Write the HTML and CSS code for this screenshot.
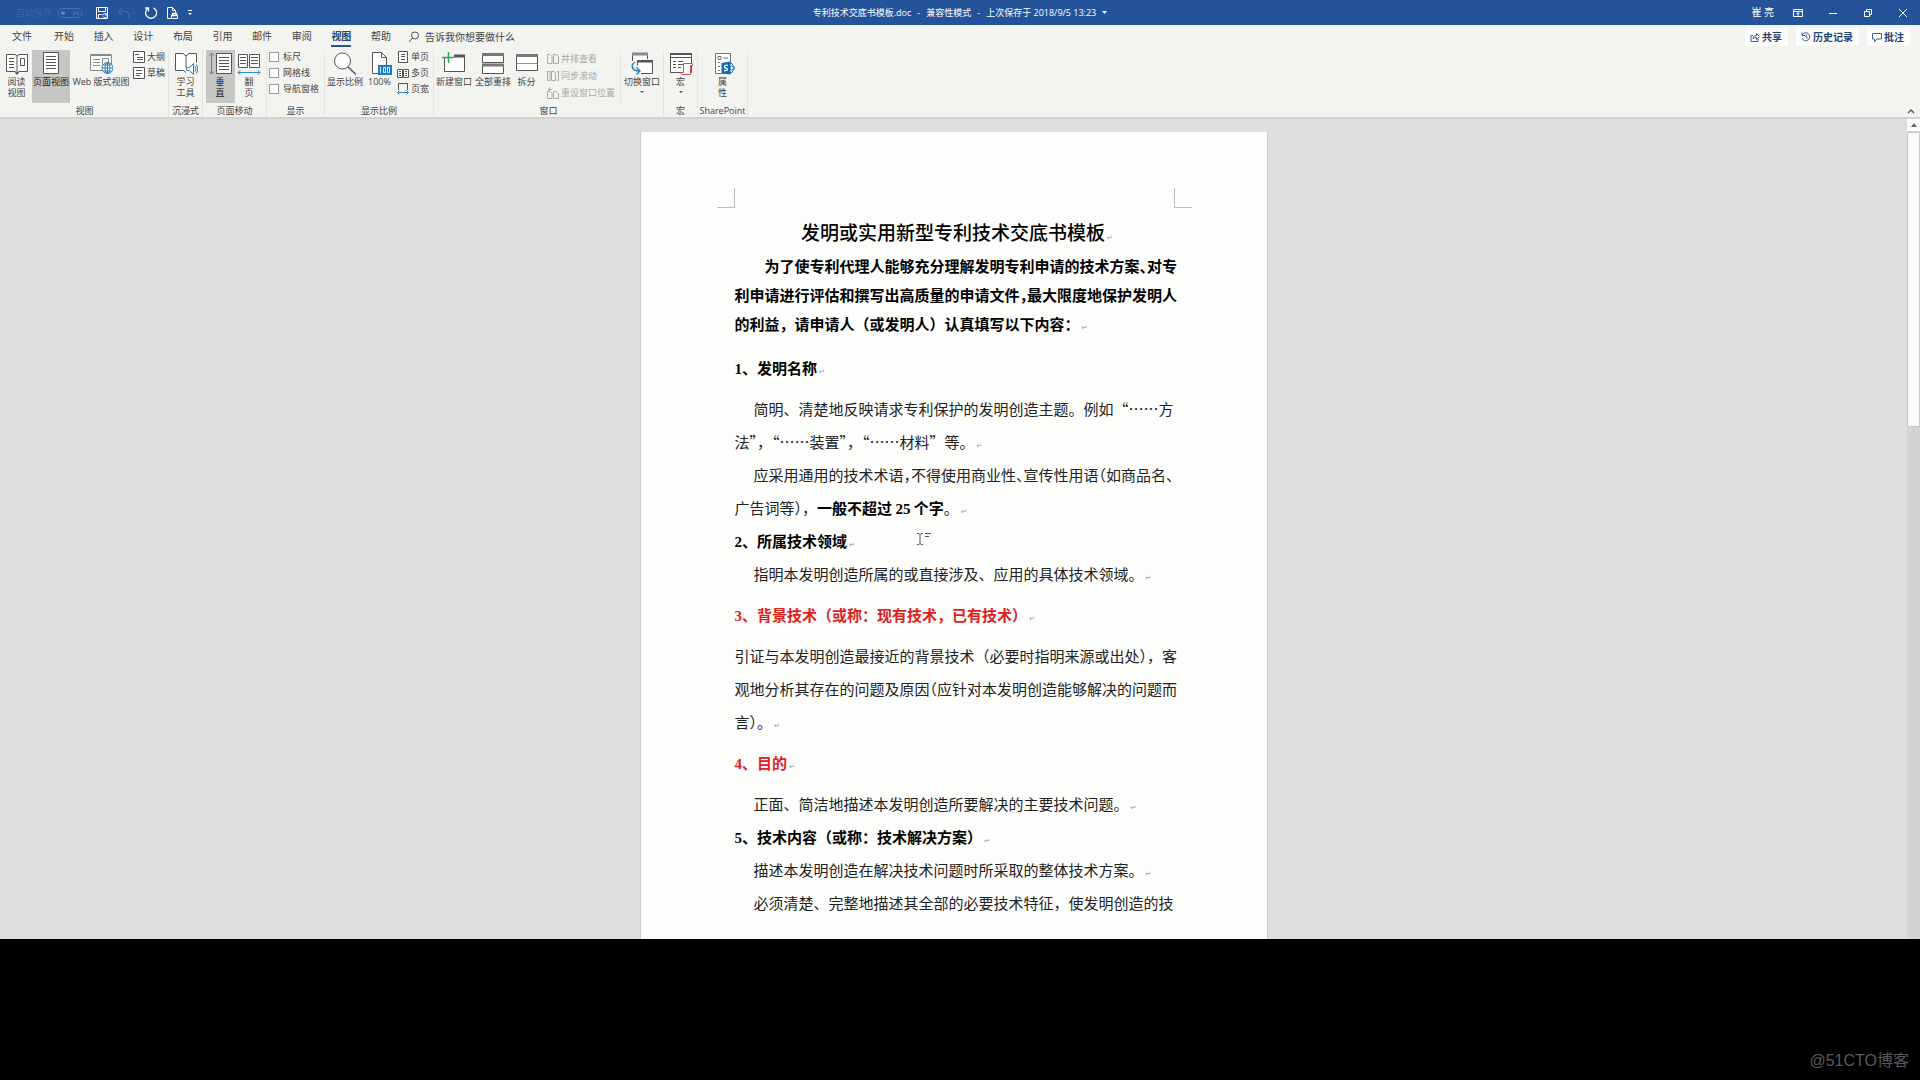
FILE: index.html
```html
<!DOCTYPE html>
<html lang="zh-CN">
<head>
<meta charset="utf-8">
<title>专利技术交底书模板.doc</title>
<link rel="stylesheet" href="styles.css">
</head>
<body>
<div class="app">
  <header class="titlebar">
    <div class="quick">
      <span class="autosave">自动保存</span>
      <svg class="toggle" width="26" height="12" viewBox="0 0 26 12"><rect x="1" y="1.500" width="24" height="9" rx="4.500" fill="none" stroke="#4a74b1"/><circle cx="6" cy="6" r="2" fill="#5d86bf"/><path d="M17 3.500v5M21 3.500v5M17 6h4" stroke="#4a74b1"/></svg>
      <button class="icon-btn save" aria-label="保存"><svg width="14" height="14" viewBox="0 0 14 14" fill="none" stroke="#fff"><path d="M1.500 1.500h11v11h-11zM3.500 1.500v4h7v-4M3.500 12.500v-4h3"/><path d="M7.500 9.500a2.200 2.200 0 0 1 4-1M11.800 7v2h-2M12 10.500a2.200 2.200 0 0 1-4 0"/></svg></button>
      <button class="icon-btn undo" aria-label="撤消"><svg width="19" height="14" viewBox="0 0 19 14" fill="none" stroke="#3a68ac"><path d="M5 2 1.500 5.500 5 9M1.500 5.500H8a3.500 3.500 0 0 1 3 6" stroke-width="1.400"/><path d="M15 6.500h4l-2 2z" fill="#3a68ac" stroke="none"/></svg></button>
      <button class="icon-btn redo" aria-label="重复"><svg width="14" height="14" viewBox="0 0 14 14" fill="none" stroke="#fff" stroke-width="1.300"><path d="M9.500 1.800A5.500 5.500 0 1 1 4 2.200M1 2h3.500v3.500"/></svg></button>
      <button class="icon-btn preview" aria-label="打印预览"><svg width="14" height="14" viewBox="0 0 14 14" fill="none" stroke="#fff"><path d="M5 12.500H1.500v-11h5l3 3v2M6.500 1.500v3h3"/><path d="M5.500 9.500h6v3h-6z"/><path d="M6.500 9V7.500h4V9M5 9.500h7" stroke-width="1.400"/></svg></button>
      <button class="icon-btn" aria-label="自定义快速访问工具栏"><svg width="4" height="8" viewBox="0 0 4 8" fill="#fff"><path d="M0 1h4v1H0zM0 4h4L2 6z"/></svg></button>
    </div>
    <div class="doc-name"><span>专利技术交底书模板.doc</span><span>-</span><span>兼容性模式</span><span>-</span><span>上次保存于 2018/9/5 13:23</span><svg width="5" height="6" viewBox="0 0 5 6"><path d="M0 1h5L2.500 4z" fill="#fff"/></svg></div>
    <div class="window-tools">
      <span class="user">崔 亮</span>
      <button class="icon-btn" aria-label="功能区显示选项"><svg width="10" height="10" viewBox="0 0 10 10" fill="none" stroke="#fff"><path d="M.5 1.500h9v7h-9zM.5 3.500h9M5 8V5M3.500 6 5 4.500 6.500 6"/></svg></button>
      <button class="icon-btn" aria-label="最小化"><svg width="10" height="10" viewBox="0 0 10 10"><path d="M1 5.500h8" stroke="#fff"/></svg></button>
      <button class="icon-btn" aria-label="还原"><svg width="10" height="10" viewBox="0 0 10 10" fill="none" stroke="#fff"><path d="M1.500 3.500h5v5h-5zM3.500 3V1.500h5v5H7"/></svg></button>
      <button class="icon-btn" aria-label="关闭"><svg width="10" height="10" viewBox="0 0 10 10"><path d="m1 1 8 8M9 1 1 9" stroke="#fff"/></svg></button>
    </div>
  </header>

  <div class="tabbar">
    <button class="tab file">文件</button>
    <nav class="tabs">
      <button class="tab">开始</button><button class="tab">插入</button><button class="tab">设计</button><button class="tab">布局</button><button class="tab">引用</button><button class="tab">邮件</button><button class="tab">审阅</button><button class="tab active">视图</button><button class="tab">帮助</button>
    </nav>
    <button class="tell-me"><svg width="12" height="12" viewBox="0 0 12 12" fill="none" stroke="#555"><circle cx="7" cy="4.500" r="3.500"/><path d="M4.500 7 1 11"/></svg>告诉我你想要做什么</button>
    <div class="share-tools">
      <button><svg width="10" height="10" viewBox="0 0 10 10" fill="none" stroke="#3d5f8f"><path d="M3 3.500H1v6h7V7M3 6.500c0-2 1.500-3 3.500-3V1.500l3 3-3 3V5.500C5 5.500 4 5.700 3 6.500z"/></svg>共享</button>
      <button><svg width="10" height="10" viewBox="0 0 10 10" fill="none" stroke="#3d5f8f"><path d="M1.200 3A4 4 0 1 1 1 6M1 .5v3h3M5 2.500V5l2 1.500"/></svg>历史记录</button>
      <button><svg width="10" height="10" viewBox="0 0 10 10" fill="none" stroke="#3d5f8f"><path d="M.5 1.500h9v5.500H5L2.500 9.500V7h-2z"/></svg>批注</button>
    </div>
  </div>

  <div class="ribbon">
    <section class="group g-view">
      <div class="tools">
        <button class="tool w31"><svg width="24" height="24" viewBox="0 0 24 24" fill="none" stroke="#555"><path d="M1.500 2.500H10l2 1.500 2-1.500h8.500v17H14l-2 1.500-2-1.500H1.500z" fill="#fff"/><path d="M12 4v17M4 6.500h5M4 9.500h5M4 12.500h5M4 15.500h5M15.500 6.500h4v7h-4z"/><path d="m10.500 20.500 1.500 2 1.500-2z" fill="#555"/></svg>阅读<br>视图</button>
        <button class="tool w38 on"><svg width="24" height="24" viewBox="0 0 24 24" stroke="#555"><path d="M4.500.5h15v21h-15z" fill="#fff"/><path d="M7 4.500h10M7 7.500h10M7 10.500h10M7 13.500h10M7 16.500h10"/></svg>页面视图</button>
        <button class="tool w62"><svg width="24" height="24" viewBox="0 0 24 24" fill="none" stroke="#888"><path d="M1.500 3.500h21v15h-21z" fill="#fff"/><path d="M1.500 2.500h21M4 7.500h7M4 10.500h7M4 13.500h7M13.500 6.500h6v6h-6z"/><circle cx="18.500" cy="16" r="5.500" fill="#fff" stroke="#2e7fb8"/><path d="M13 16h11M18.500 10.500v11M14.500 13h8M14.500 19h8" stroke="#2e7fb8"/><ellipse cx="18.500" cy="16" rx="2.500" ry="5.500" stroke="#2e7fb8"/></svg>Web 版式视图</button>
        <div class="stack">
          <button class="mini"><svg width="12" height="12" viewBox="0 0 12 12" fill="#fff" stroke="#555"><path d="M.5.5h11v11H.5zM2 3.500h4M4 6.500h6M4 8.500h6"/></svg>大纲</button>
          <button class="mini"><svg width="12" height="12" viewBox="0 0 12 12" fill="#fff" stroke="#555"><path d="M.5.5h11v11H.5zM3 3.500h6M3 6.500h6M3 8.500h4"/></svg>草稿</button>
        </div>
      </div>
      <h2>视图</h2>
    </section>
    <section class="group g-immersive">
      <div class="tools center">
        <button class="tool w33"><svg width="24" height="24" viewBox="0 0 24 24" fill="none" stroke="#555"><path d="M12 20H11l-1-.5H1.500V1.500H9L12 4l3-2.500h7.500v9L12 16z" fill="#fff" stroke="none"/><path d="M12 4v12M12 20.500l-2.500-2h-8v-17H9L12 4l3-2.500h7.500v9"/><path d="M12.500 15.500h3l4-4v11l-4-4h-3z" fill="#fff" stroke="#2e7fb8"/><path d="M21 14.500q2 2.500 0 5M22.500 12.500q3 4.500 0 9" stroke="#2e7fb8"/></svg>学习<br>工具</button>
      </div>
      <h2>沉浸式</h2>
    </section>
    <section class="group g-move">
      <div class="tools center">
        <button class="tool w29 on"><svg width="24" height="24" viewBox="0 0 24 24" fill="none" stroke="#555"><path d="M8.500 1.500h15v20h-15z" fill="#fff"/><path d="M11 5.500h10M11 8.500h10M11 11.500h10M11 14.500h10M11 17.500h10"/><path d="M3.500 1v21M1 3.500 3.500 1 6 3.500M1 19.500 3.500 22 6 19.500" stroke="#2e8fc8"/></svg>垂<br>直</button>
        <button class="tool w29"><svg width="24" height="24" viewBox="0 0 24 24" fill="none" stroke="#555"><path d="M1.500 2.500h9v13h-9zM12.500 2.500h10v13h-10z" fill="#fff"/><path d="M3 5.500h6M3 8.500h6M3 11.500h6M14 5.500h7M14 8.500h7M14 11.500h7"/><path d="M1 20.500h22M3.500 18 1 20.500 3.500 23M20.500 18l2.500 2.500-2.500 2.500" stroke="#2e8fc8"/></svg>翻<br>页</button>
      </div>
      <h2>页面移动</h2>
    </section>
    <section class="group g-show">
      <div class="stack checks">
        <label><input type="checkbox">标尺</label>
        <label><input type="checkbox">网格线</label>
        <label><input type="checkbox">导航窗格</label>
      </div>
      <h2>显示</h2>
    </section>
    <section class="group g-zoom">
      <div class="tools">
        <button class="tool w40"><svg width="24" height="24" viewBox="0 0 24 24" fill="none" stroke="#555"><circle cx="9.500" cy="9" r="8" fill="#fff"/><path d="m15 15 8 7.500" stroke-width="1.500"/></svg>显示比例</button>
        <button class="tool w29"><svg width="24" height="24" viewBox="0 0 24 24" stroke="#555"><path d="M4.500.5h9l5 5v16h-14z" fill="#fff"/><path d="M13.500.5v5h5" fill="none"/><path d="M10 13h14v10H10z" fill="#1c7ec2" stroke="none"/><path d="M12.500 15v6M15.500 15.500h2v5h-2zM19.500 15.500h2v5h-2z" fill="none" stroke="#d8ecf8"/></svg>100%</button>
        <div class="stack">
          <button class="mini"><svg width="12" height="12" viewBox="0 0 12 12" fill="#fff" stroke="#555"><path d="M1.500.5h9v11h-9zM4 3.500h4M4 5.500h4M4 8.500h4"/></svg>单页</button>
          <button class="mini"><svg width="12" height="12" viewBox="0 0 12 12" fill="#fff" stroke="#555"><path d="M.5 2.500h5v8h-5zM6.500 2.500h5v8h-5zM2 4.500h2M2 6.500h2M2 8.500h2M8 4.500h2M8 6.500h2M8 8.500h2"/></svg>多页</button>
          <button class="mini"><svg width="12" height="12" viewBox="0 0 12 12" fill="none" stroke="#555"><path d="M1.500 7V.5h9V7"/><path d="M.5 9.500h11M2.500 7.500l-2 2 2 2M9.500 7.500l2 2-2 2" stroke="#2e8fc8"/></svg>页宽</button>
        </div>
      </div>
      <h2>显示比例</h2>
    </section>
    <section class="group g-window">
      <div class="tools">
        <button class="tool w40"><svg width="24" height="24" viewBox="0 0 24 24" fill="none" stroke="#555"><path d="M2.500 6v13.500h20V3.500H12" fill="#fff"/><path d="M12 4h11" stroke-width="3"/><path d="M6.500 0v11M0 5.500h12" stroke="#2fa05a" stroke-width="1.500"/></svg>新建窗口</button>
        <button class="tool w38"><svg width="24" height="24" viewBox="0 0 24 24" stroke="#555"><path d="M1.500 1.500h21v9h-21zM1.500 12.500h21v9h-21z" fill="#fff"/><path d="M1 2.500h22M1 13h22" stroke-width="3" stroke="#777"/></svg>全部重排</button>
        <button class="tool w29"><svg width="24" height="24" viewBox="0 0 24 24" stroke="#555"><path d="M1.500 2.500h21v16h-21z" fill="#fff"/><path d="M1 3.500h22" stroke-width="3" stroke="#777"/><path d="M2 11.500h20" stroke="#8497a8"/></svg>拆分</button>
        <div class="stack disabled">
          <button class="mini" disabled><svg width="12" height="12" viewBox="0 0 12 12" fill="none" stroke="#aaa"><path d="M.5 1.500H3l2 2v7H.5zM6.500 1.500H9l2.500 2v7h-5z"/></svg>并排查看</button>
          <button class="mini" disabled><svg width="12" height="12" viewBox="0 0 12 12" fill="none" stroke="#aaa"><path d="M.5 1.500H3v9H.5zM4.500 1.500H7l1.500 2v7h-4zM11.500 1v10M10 2.500 11.500 1M10 9.500l1.500 1.500"/></svg>同步滚动</button>
          <button class="mini" disabled><svg width="12" height="12" viewBox="0 0 12 12" fill="none" stroke="#aaa"><path d="M.5 4.500H3l2 2v5H.5zM6.500 4.500H9l2.500 2v5h-5zM1 2.500h4M3 .5l-2 2 2 1"/></svg>重设窗口位置</button>
        </div>
        <div class="switch">
          <button class="tool w42"><svg width="24" height="24" viewBox="0 0 24 24" fill="none" stroke="#555"><path d="M2.500 9V1.500h15V7" fill="#fff"/><path d="M2 2h16" stroke-width="3" stroke="#888"/><path d="M7.500 8.500h15v13H11M7.500 8.500v5" fill="#fff"/><path d="M7 9.500h16" stroke-width="2"/><path d="M5 10c-5 3-3 9 4 9M6.500 15.500 10 19l-3.500 3.500" stroke="#2e7fb8" stroke-width="1.400"/></svg>切换窗口<i class="drop"></i></button>
        </div>
      </div>
      <h2>窗口</h2>
    </section>
    <section class="group g-macro">
      <div class="tools center">
        <button class="tool w29"><svg width="24" height="24" viewBox="0 0 24 24" fill="none" stroke="#555"><path d="M1.500 1.500h21v19h-21z" fill="#fff"/><path d="M1 2h22" stroke-width="2"/><path d="M2 5.500h20M4 9.500h3M9 9.500h5M4 12.500h3M9 12.500h5M4 15.500h3M9 15.500h3"/><path d="M14.500 11.500h9v2h-2v9h-9v-2h2z" fill="#fff" stroke="#cf5560"/></svg>宏<i class="drop"></i></button>
      </div>
      <h2>宏</h2>
    </section>
    <section class="group g-sp">
      <div class="tools center">
        <button class="tool w29"><svg width="24" height="24" viewBox="0 0 24 24" fill="none" stroke="#777"><path d="M4.500 1.500h15v20h-15z" fill="#fff"/><path d="M7 4.500h3v3H7zM12 6h5M7 10.500h2M7 14.500h2M7 18.500h2"/><path d="M18 11.500h3l2.500 4.500-2.500 4.500h-3z" fill="#fff" stroke="#2e7fb8"/><circle cx="20.500" cy="16" r="2" stroke="#2e7fb8"/><path d="m10.500 11 9-1.500v13l-9-1.500z" fill="#0f6ab8" stroke="none"/><path d="M17 13.500q-3.500-1-3.500 1T16 16.500q1.500 2.500-3 2" stroke="#fff" stroke-width="1.300"/></svg>属<br>性</button>
      </div>
      <h2>SharePoint</h2>
    </section>
    <button class="collapse" aria-label="折叠功能区"><svg width="8" height="6" viewBox="0 0 8 6"><path d="m1 5 3-3 3 3" fill="none" stroke="#555" stroke-width="1.300"/></svg></button>
  </div>

  <main class="workspace">
    <div class="canvas">
      <article class="page">
        <i class="margin-mark left"></i><i class="margin-mark right"></i>
        <h1>发明或实用新型专利技术交底书模板<i class="ret">↵</i></h1>
        <p class="intro">为了使专利代理人能够充分理解发明专利申请的技术方案<span class="half">、</span>对专<br>利申请进行评估和撰写出高质量的申请文件<span class="half">，</span>最大限度地保护发明人<br>的利益，请申请人（或发明人）认真填写以下内容：<i class="ret">↵</i></p>
        <h3 class="spaced"><span class="num">1</span>、发明名称<i class="ret">↵</i></h3>
        <p class="indent">简明、清楚地反映请求专利保护的发明创造主题。例如“……方<br>法<span class="half">”，</span>“……装置<span class="half">”，</span>“……材料”等。<i class="ret">↵</i></p>
        <p class="indent">应采用通用的技术术语<span class="half">，</span>不得使用商业性<span class="half">、</span>宣传性用语<span class="half">（</span>如商品名、<br>广告词等<span class="half">）</span>，<b>一般不超过 <span class="num">25</span> 个字</b>。<i class="ret">↵</i></p>
        <h3><span class="num">2</span>、所属技术领域<i class="ret">↵</i></h3>
        <p class="indent">指明本发明创造所属的或直接涉及、应用的具体技术领域。<i class="ret">↵</i></p>
        <h3 class="spaced red"><span class="num">3</span>、背景技术（或称：现有技术，已有技术）<i class="ret">↵</i></h3>
        <p>引证与本发明创造最接近的背景技术（必要时指明来源或出处<span class="half">）</span>，客<br>观地分析其存在的问题及原因<span class="half">（</span>应针对本发明创造能够解决的问题而<br>言<span class="half">）</span>。<i class="ret">↵</i></p>
        <h3 class="spaced red"><span class="num">4</span>、目的<i class="ret">↵</i></h3>
        <p class="indent">正面、简洁地描述本发明创造所要解决的主要技术问题。<i class="ret">↵</i></p>
        <h3><span class="num">5</span>、技术内容（或称：技术解决方案）<i class="ret">↵</i></h3>
        <p class="indent">描述本发明创造在解决技术问题时所采取的整体技术方案。<i class="ret">↵</i></p>
        <p class="indent">必须清楚、完整地描述其全部的必要技术特征，使发明创造的技</p>
        <svg class="cursor" width="16" height="14" viewBox="0 0 16 14" fill="none" stroke="#555"><path d="M1 1.500h2l1 1 1-1h2M4 2v10M1 12.500h2l1-1 1 1h2M9 1.500h6M9 4.500h4"/></svg>
      </article>
    </div>
    <div class="scrollbar">
      <button class="scroll-up" aria-label="向上滚动"><svg width="6" height="4" viewBox="0 0 6 4"><path d="M0 4h6L3 0z" fill="#666"/></svg></button>
      <div class="thumb"></div>
    </div>
  </main>
  <footer class="letterbox">@51CTO博客</footer>
</div>
</body>
</html>
```
FILE: styles.css
```css
* { box-sizing: border-box; }
body {
  margin: 0;
  background: #000;
  color: #444;
  font: 9px/11px "Open Sans", "Noto Sans CJK SC", sans-serif;
}
button {
  margin: 0;
  padding: 0;
  border: 0;
  background: none;
  color: inherit;
  font: inherit;
  white-space: nowrap;
}
svg { display: block; flex: none; }
h1, h2, h3, p { margin: 0; }
.app { display: flex; flex-direction: column; height: 100vh; }

/* Title bar */
.titlebar {
  display: grid;
  grid-template-columns: 1fr auto 1fr;
  align-items: center;
  height: 25px;
  background: #24539a;
  color: #fff;
}
.quick { display: flex; align-items: center; padding-left: 16px; }
.autosave { color: #3a68ac; }
.toggle { margin-left: 5px; margin-right: 12px; }
.save, .undo { margin-right: 8px; }
.redo, .preview { margin-right: 8px; }
.doc-name { display: flex; align-items: center; gap: 6px; white-space: nowrap; }
.window-tools { display: flex; align-items: center; justify-content: flex-end; gap: 25px; padding-right: 12px; }
.user { font-size: 10px; margin-right: -6px; }

/* Tabs */
.tabbar { display: flex; align-items: center; height: 24px; background: #f3f3f0; padding: 0 10px 0 12px; font-size: 10px; }
.file { margin-right: 22px; }
.tabs { display: flex; justify-content: space-between; width: 337px; }
.tab { height: 20px; border-bottom: 2px solid transparent; line-height: 18px; }
.tab.active { border-color: #24539a; color: #24456f; font-weight: bold; }
.tell-me { display: flex; align-items: center; gap: 5px; margin-left: 17px; }
.share-tools { display: flex; gap: 8px; margin-left: auto; }
.share-tools button {
  display: flex;
  align-items: center;
  gap: 2px;
  height: 18px;
  padding: 0 6px 0 5px;
  background: #fdfdfd;
  color: #24456f;
  font-weight: bold;
}

/* Ribbon */
.ribbon { display: flex; height: 70px; padding: 1px 0 0 1px; background: #f3f3f0; border-bottom: 2px solid #d2d2d0; }
.group { display: flex; flex-direction: column; justify-content: space-between; height: 67px; border-right: 1px solid #e4e4e2; }
.group h2 { font-size: 9px; font-weight: normal; line-height: 13px; text-align: center; white-space: nowrap; }
.g-view { width: 168px; }
.g-immersive { width: 34px; }
.g-move { width: 64px; }
.g-show { width: 58px; }
.g-zoom { width: 109px; }
.g-window { width: 230px; }
.g-macro { width: 34px; }
.g-sp { width: 50px; }
.tools { display: flex; height: 53px; }
.tools.center { justify-content: center; }
.tool { display: flex; flex-direction: column; align-items: center; height: 53px; padding-top: 2px; text-align: center; }
.tool.on { background: #c6c6c4; color: #222; }
.w29 { width: 29px; }
.w31 { width: 31px; }
.w33 { width: 33px; }
.w38 { width: 38px; }
.w40 { width: 40px; }
.w42 { width: 42px; }
.w62 { width: 62px; }
.stack { display: flex; flex-direction: column; gap: 3px; padding: 0 0 0 1px; }
.mini { display: flex; align-items: center; gap: 2px; height: 13px; }
.g-zoom .stack { padding-left: 3px; }
.stack.disabled { gap: 4px; padding: 2px 0 0 6px; }
.mini:disabled { color: #aaa; }
.switch { margin-left: auto; border-left: 1px solid #e4e4e2; }
.drop { margin-top: 4px; border: 2px solid transparent; border-top-color: #555; }
.checks label { display: flex; align-items: center; gap: 4px; height: 13px; white-space: nowrap; }
.checks { padding-left: 2px; }
.checks input { appearance: none; width: 10px; height: 10px; margin: 0; border: 1px solid #999; background: #fff; }
.collapse { align-self: flex-end; margin: 0 5px 3px auto; }

/* Document area */
.workspace { display: flex; flex: 1; min-height: 0; background: #dedede; }
.canvas { flex: 1; overflow: hidden; padding-top: 13px; }
.page {
  position: relative;
  display: flex;
  flex-direction: column;
  width: 628px;
  min-height: 888px;
  margin: 0 auto;
  padding: 81px 91px 0 94px;
  border: 1px solid #cbcbcb;
  border-width: 0 1px;
  background: #fdfdfb;
  color: #222;
  font: 15px/33px "Noto Sans CJK SC", sans-serif;
  white-space: nowrap;
  text-spacing-trim: space-all;
}
.page h1 { color: #000; font-size: 19px; font-weight: 500; line-height: 38px; padding-left: 4px; text-align: center; }
.page h3 { color: #000; font-size: 15px; font-weight: bold; }
.page b { color: #000; }
.page .spaced { margin: 8px 0; }
.page .red { color: #e02020; }
.intro { margin-bottom: 5px; color: #000; font-weight: bold; line-height: 29px; text-indent: 30px; }
.indent { text-indent: 19px; }
.half { font-feature-settings: "halt"; }
.num { font-family: "Liberation Serif", serif; line-height: 15px; }
.ret { margin-left: 2px; color: #8c92a8; font: 7px/7px "DejaVu Sans", sans-serif; }
.margin-mark { position: absolute; top: 56px; width: 18px; height: 20px; border-bottom: 1px solid #bbb; }
.margin-mark.left { left: 76px; border-right: 1px solid #bbb; }
.margin-mark.right { right: 75px; border-left: 1px solid #bbb; }
.cursor { position: absolute; left: 275px; top: 400px; }

.scrollbar { display: flex; flex-direction: column; gap: 1px; width: 13px; background: #d4d4d4; }
.scroll-up { display: grid; place-items: center; height: 12px; background: #fbfbfb; }
.thumb { height: 36%; background: #fbfbfb; border: 1px solid #c8c8c8; }

.letterbox { height: 141px; padding: 111px 11px 0 0; background: #000; color: #5a5a5a; font: 16px/22px "Liberation Sans", "Noto Sans CJK SC", sans-serif; text-align: right; }
```
